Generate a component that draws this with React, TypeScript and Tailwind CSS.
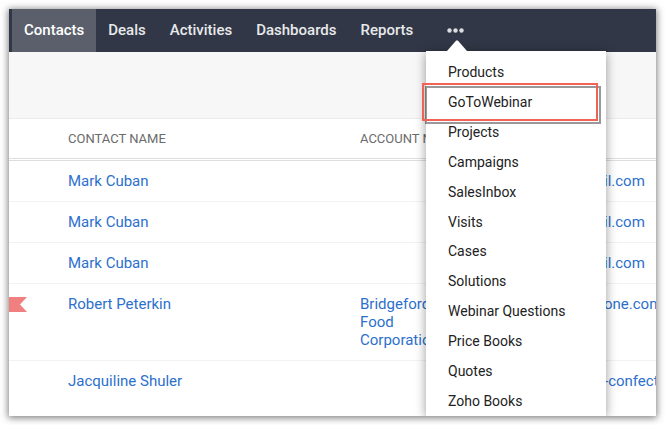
import clsx from 'clsx';

interface Contact {
  name: string;
  account?: string;
  email: string;
  flagged?: boolean;
}

const TABS = ['Contacts', 'Deals', 'Activities', 'Dashboards', 'Reports'];

const MORE_ITEMS = [
  'Products',
  'GoToWebinar',
  'Projects',
  'Campaigns',
  'SalesInbox',
  'Visits',
  'Cases',
  'Solutions',
  'Webinar Questions',
  'Price Books',
  'Quotes',
  'Zoho Books',
];

const CONTACTS: Contact[] = [
  { name: 'Mark Cuban', email: 'il.com' },
  { name: 'Mark Cuban', email: 'il.com' },
  { name: 'Mark Cuban', email: 'il.com' },
  {
    name: 'Robert Peterkin',
    account: 'Bridgeford Food Corporation',
    email: 'one.com',
    flagged: true,
  },
  { name: 'Jacquiline Shuler', email: '-confect' },
];

function FlagIcon() {
  return (
    <svg viewBox="0 0 18 15" className="mt-0.5 h-[15px] w-[18px]" aria-hidden="true">
      <path d="M0 0h18l-7 7.5 7 7.5H0z" fill="#f08080" />
    </svg>
  );
}

function MoreMenu() {
  return (
    <div className="absolute top-[42px] bottom-0 left-[417px] z-10 w-[180px] bg-white pt-1.5 shadow-[0_2px_10px_rgba(0,0,0,0.4)]">
      <svg
        viewBox="0 0 20 11"
        className="absolute bottom-full left-[21px] h-[11px] w-5"
        aria-hidden="true"
      >
        <path d="M0 11 9 .8q1-1 2 0L20 11z" fill="#fff" />
      </svg>
      <ul className="grid h-full auto-rows-fr">
        {MORE_ITEMS.map((item) => (
          <li key={item} className="relative flex items-center">
            <a href="#" className="px-[22px] text-sm text-[#222]">
              {item}
            </a>
            {item === 'GoToWebinar' && (
              <span className="pointer-events-none absolute -inset-y-1 -left-1 right-2 border-2 border-[#f06355] drop-shadow-[3px_3px_0.5px_rgba(0,0,0,0.4)]" />
            )}
          </li>
        ))}
      </ul>
    </div>
  );
}

function NavBar() {
  return (
    <nav className="flex h-[43px] bg-[#313746] pl-[3px] text-[15px] font-medium text-[#e8e9eb]">
      {TABS.map((tab, i) => (
        <a
          key={tab}
          href="#"
          className={clsx('flex items-center px-3', i === 0 && 'bg-[#5a5f6b] text-white')}
        >
          {tab}
        </a>
      ))}
      <button type="button" aria-label="More" className="ml-2.5 flex items-center px-3">
        <svg viewBox="0 0 17 5" className="h-[5px] w-[17px]" fill="#dcdde0">
          <circle cx="2.5" cy="2.5" r="2.2" />
          <circle cx="8.5" cy="2.5" r="2.2" />
          <circle cx="14.5" cy="2.5" r="2.2" />
        </svg>
      </button>
    </nav>
  );
}

function ContactsTable() {
  return (
    <table className="w-full table-fixed border-separate border-spacing-0 text-left text-[15px] leading-[18px]">
      <colgroup>
        <col className="w-[59px]" />
        <col className="w-[292px]" />
        <col className="w-[244px]" />
        <col />
      </colgroup>
      <thead>
        <tr className="text-[13px] text-[#6b6b6b] [&>th]:h-[42px] [&>th]:border-b-3 [&>th]:border-double [&>th]:border-[#dedede] [&>th]:font-normal">
          <th aria-label="Flag" />
          <th>CONTACT NAME</th>
          <th>ACCOUNT NAME</th>
          <th aria-label="Email" />
        </tr>
      </thead>
      <tbody className="text-[#2c70cc]">
        {CONTACTS.map((c, i) => (
          <tr
            key={i}
            className="align-top [&>td]:border-b [&>td]:border-[#f2f2f2] [&>td]:py-[11px] last:[&>td]:border-b-0 last:[&>td]:pb-[26px]"
          >
            <td>{c.flagged && <FlagIcon />}</td>
            <td>
              <a href="#">{c.name}</a>
            </td>
            <td>
              {c.account && (
                <a href="#" className="block w-20">
                  {c.account}
                </a>
              )}
            </td>
            <td className="whitespace-nowrap">
              <a href="#">{c.email}</a>
            </td>
          </tr>
        ))}
      </tbody>
    </table>
  );
}

export default function App() {
  return (
    <div className="bg-white p-[9px] font-['Roboto',sans-serif]">
      <div className="relative shadow-[0_1px_7px_1px_rgba(0,0,0,0.5)]">
        <div className="relative overflow-hidden bg-white">
          <NavBar />
          <div className="h-[67px] border-b border-[#ebebeb] bg-[#f7f7f7]" />
          <ContactsTable />
          <MoreMenu />
        </div>
      </div>
    </div>
  );
}
